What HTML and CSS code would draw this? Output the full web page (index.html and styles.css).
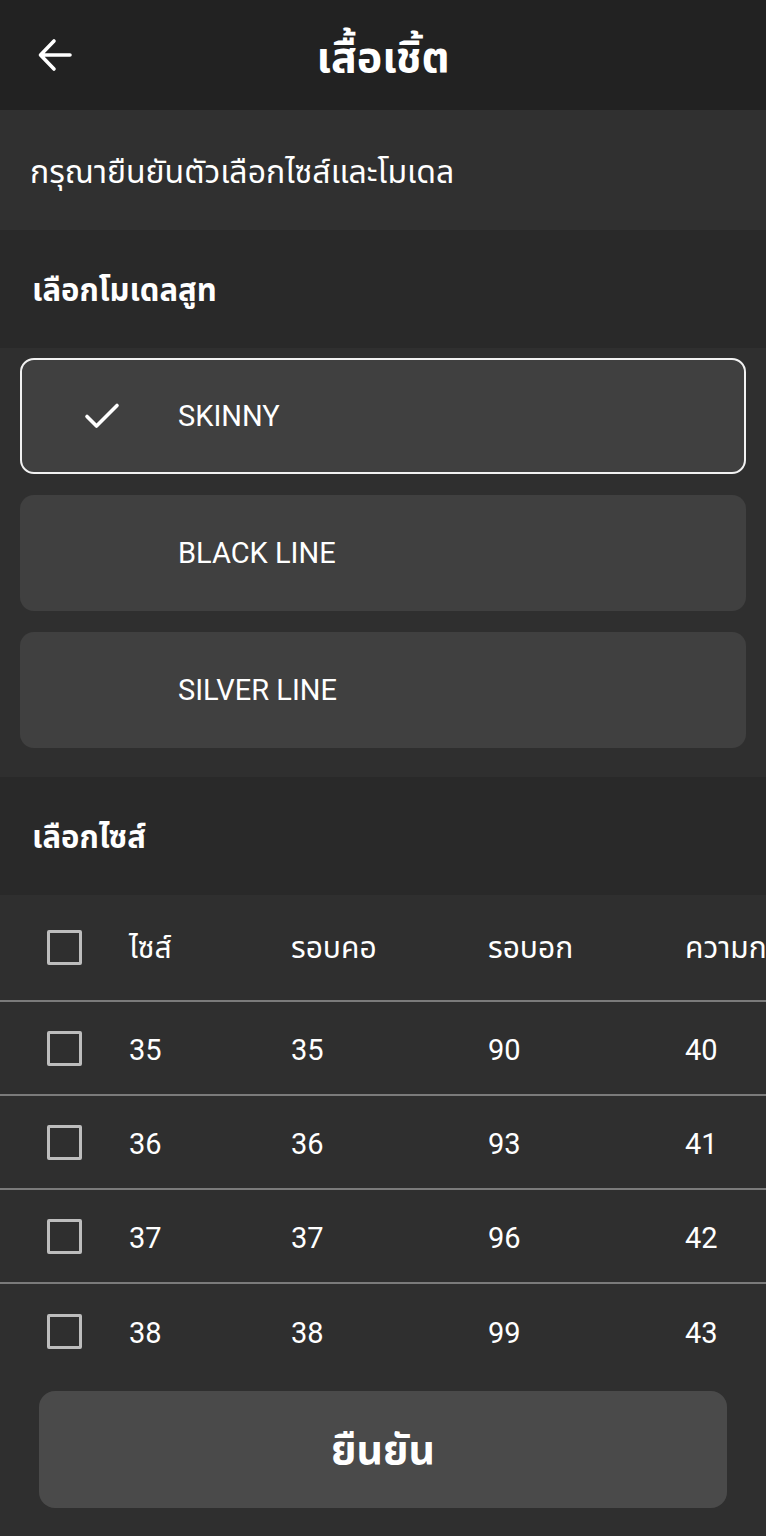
FILE: index.html
```html
<!DOCTYPE html>
<html lang="th">
<head>
<meta charset="utf-8">
<title>เสื้อเชิ้ต</title>
<link rel="stylesheet" href="styles.css">
</head>
<body>
<div class="app">
  <header class="topbar">
    <svg class="back" width="36" height="36" viewBox="0 0 36 36" aria-hidden="true">
      <path d="M33 18H4M17 4L3.5 18L17 32" fill="none" stroke="#fff" stroke-width="3.6" stroke-linecap="round" stroke-linejoin="round"/>
    </svg>
    <h1 class="title">เสื้อเชิ้ต</h1>
  </header>

  <div class="notice">กรุณายืนยันตัวเลือกไซส์และโมเดล</div>

  <div class="section-head">เลือกโมเดลสูท</div>

  <div class="models">
    <div class="model selected">
      <span class="check">
        <svg width="36" height="28" viewBox="0 0 36 28" aria-hidden="true">
          <path d="M3 14.5L12.5 24L33 3.5" fill="none" stroke="#fff" stroke-width="3.6" stroke-linecap="round" stroke-linejoin="round"/>
        </svg>
      </span>
      <span class="model-name">SKINNY</span>
    </div>
    <div class="model">
      <span class="check"></span>
      <span class="model-name">BLACK LINE</span>
    </div>
    <div class="model">
      <span class="check"></span>
      <span class="model-name">SILVER LINE</span>
    </div>
  </div>

  <div class="section-head">เลือกไซส์</div>

  <div class="sizes">
    <div class="row head">
      <span class="box"></span>
      <span class="th">ไซส์</span><span class="th">รอบคอ</span><span class="th">รอบอก</span><span class="th">ความก</span>
    </div>
    <div class="row">
      <span class="box"></span>
      <span>35</span><span>35</span><span>90</span><span>40</span>
    </div>
    <div class="row">
      <span class="box"></span>
      <span>36</span><span>36</span><span>93</span><span>41</span>
    </div>
    <div class="row">
      <span class="box"></span>
      <span>37</span><span>37</span><span>96</span><span>42</span>
    </div>
    <div class="row last">
      <span class="box"></span>
      <span>38</span><span>38</span><span>99</span><span>43</span>
    </div>
    <div class="actions">
      <button class="confirm" type="button">ยืนยัน</button>
    </div>
  </div>
</div>
</body>
</html>
```

FILE: styles.css
```css
* { box-sizing: border-box; }

html, body {
  margin: 0;
  padding: 0;
  background: #2f2f2f;
}

body {
  font-family: Roboto, "Noto Sans", "Noto Sans Thai", sans-serif;
  color: #ffffff;
  width: 766px;
  overflow: hidden;
}

.app {
  display: flex;
  flex-direction: column;
  min-height: 1536px;
}

.topbar {
  height: 110px;
  background: #222222;
  display: flex;
  align-items: center;
  justify-content: center;
  position: relative;
}

.back {
  position: absolute;
  left: 37px;
  top: 37px;
}

.title {
  margin: 0;
  font-size: 43px;
  font-weight: 700;
  line-height: 1;
  padding-top: 4px;
}

.notice {
  height: 120px;
  background: #303030;
  display: flex;
  align-items: center;
  padding-left: 30px;
  padding-top: 6px;
  font-size: 32px;
  font-weight: 400;
}

.section-head {
  height: 118px;
  background: #292929;
  display: flex;
  align-items: center;
  padding-left: 32px;
  padding-top: 4px;
  font-size: 31px;
  font-weight: 700;
}

.models {
  background: #2f2f2f;
  padding: 10px 20px 29px;
  display: flex;
  flex-direction: column;
  gap: 21px;
}

.model {
  height: 116px;
  background: #404040;
  border-radius: 14px;
  display: flex;
  align-items: center;
  border: 2px solid transparent;
}

.model.selected {
  border-color: #f2f2f2;
}

.check {
  width: 156px;
  display: flex;
  justify-content: center;
  padding-left: 4px;
}

.model-name {
  font-size: 29px;
  font-weight: 400;
}

.sizes {
  background: #2f2f2f;
  display: flex;
  flex-direction: column;
  overflow: hidden;
  flex: 1;
}

.row {
  display: grid;
  grid-template-columns: 82px 162px 197px 197px 200px;
  align-items: center;
  padding-left: 47px;
  height: 94px;
  border-bottom: 2px solid #7b7b7b;
  font-size: 29px;
  white-space: nowrap;
}

.row > span:not(.box) {
  padding-top: 3px;
}

.row.head {
  height: 107px;
}

.row .th {
  font-size: 30px;
  padding-top: 5px;
}

.row.last {
  border-bottom: none;
}

.box {
  width: 35px;
  height: 35px;
  border: 3px solid #bdbdbd;
  border-radius: 2px;
}

.actions {
  padding: 13px 39px 28px;
}

.confirm {
  width: 688px;
  height: 117px;
  border: none;
  border-radius: 16px;
  background: #4a4a4a;
  color: #ffffff;
  font-family: Roboto, "Noto Sans", "Noto Sans Thai", sans-serif;
  font-size: 41px;
  font-weight: 700;
  display: flex;
  align-items: center;
  justify-content: center;
  padding-top: 4px;
}
```
